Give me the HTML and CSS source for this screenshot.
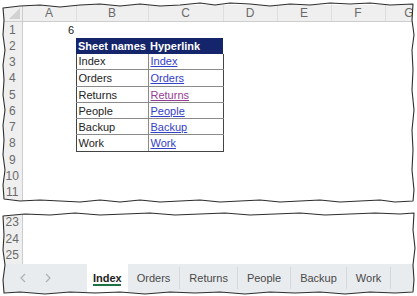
FILE: index.html
```html
<!DOCTYPE html>
<html lang="en">
<head>
    <meta charset="UTF-8">
    <title>Sheet names and hyperlinks</title>
    <link rel="stylesheet" href="styles.css">
</head>
<body>
<div class="page">
    <div class="panel panel-top">
        <table class="sheet">
            <colgroup>
                <col class="c-rh"><col class="c-a"><col class="c-b"><col class="c-c">
                <col class="c-d"><col class="c-e"><col class="c-f"><col class="c-g">
            </colgroup>
            <thead>
                <tr>
                    <th class="corner"><span class="tri"></span></th>
                    <th>A</th><th>B</th><th>C</th><th>D</th><th>E</th><th>F</th><th>G</th>
                </tr>
            </thead>
            <tbody>
                <tr><th>1</th><td class="num">6</td><td></td><td></td><td></td><td></td><td></td><td></td></tr>
                <tr><th>2</th><td></td><td class="hd">Sheet names</td><td class="hd">Hyperlink</td><td></td><td></td><td></td><td></td></tr>
                <tr><th>3</th><td></td><td class="tb">Index</td><td class="tc"><a href="#">Index</a></td><td></td><td></td><td></td><td></td></tr>
                <tr class="tall"><th>4</th><td></td><td class="tb">Orders</td><td class="tc"><a href="#">Orders</a></td><td></td><td></td><td></td><td></td></tr>
                <tr><th>5</th><td></td><td class="tb">Returns</td><td class="tc"><a href="#" class="visited">Returns</a></td><td></td><td></td><td></td><td></td></tr>
                <tr><th>6</th><td></td><td class="tb">People</td><td class="tc"><a href="#">People</a></td><td></td><td></td><td></td><td></td></tr>
                <tr><th>7</th><td></td><td class="tb">Backup</td><td class="tc"><a href="#">Backup</a></td><td></td><td></td><td></td><td></td></tr>
                <tr class="tall"><th>8</th><td></td><td class="tb last">Work</td><td class="tc last"><a href="#">Work</a></td><td></td><td></td><td></td><td></td></tr>
                <tr><th>9</th><td></td><td></td><td></td><td></td><td></td><td></td><td></td></tr>
                <tr><th>10</th><td></td><td></td><td></td><td></td><td></td><td></td><td></td></tr>
                <tr class="tall"><th>11</th><td></td><td></td><td></td><td></td><td></td><td></td><td></td></tr>
            </tbody>
        </table>
    </div>

    <div class="panel panel-bottom">
        <table class="sheet">
            <colgroup>
                <col class="c-rh"><col class="c-a"><col class="c-b"><col class="c-c">
                <col class="c-d"><col class="c-e"><col class="c-f"><col class="c-g">
            </colgroup>
            <tbody>
                <tr class="tall"><th>23</th><td></td><td></td><td></td><td></td><td></td><td></td><td></td></tr>
                <tr><th>24</th><td></td><td></td><td></td><td></td><td></td><td></td><td></td></tr>
                <tr class="tall"><th>25</th><td></td><td></td><td></td><td></td><td></td><td></td><td></td></tr>
            </tbody>
        </table>
        <div class="tabs">
            <div class="nav">
                <svg width="8" height="10" viewBox="0 0 8 10"><path d="M6 1 L2 5 L6 9" fill="none" stroke="#b0b0b0" stroke-width="1.2"/></svg>
                <svg width="8" height="10" viewBox="0 0 8 10"><path d="M2 1 L6 5 L2 9" fill="none" stroke="#b0b0b0" stroke-width="1.2"/></svg>
            </div>
            <div class="tab active">Index</div>
            <div class="tab">Orders</div>
            <div class="tab">Returns</div>
            <div class="tab">People</div>
            <div class="tab">Backup</div>
            <div class="tab">Work</div>
        </div>
    </div>

    <!-- torn paper edges drawn over both panels -->
    <svg class="tear" width="417" height="296" viewBox="0 0 417 296">
        <path fill="#fff" fill-rule="evenodd" d="M0 0 H417 V296 H0 Z
            M3 8 L20 6 L40 5 L60 7 L80 5 L100 4 L120 6 L140 4 L160 6 L180 5 L200 3 L215 5 L230 3 L250 4 L270 6 L290 4 L310 5 L330 3 L350 4 L370 3 L390 5 L413 4
            L412 20 L414 35 L412 50 L413 70 L412 90 L414 110 L412 130 L413 150 L412 170 L414 190 L413 201
            L395 202 L380 200 L360 201 L340 202 L320 200 L300 201 L280 202 L260 200 L240 201 L220 202 L200 200 L180 201 L160 202 L140 200 L120 202 L100 200 L80 202 L60 201 L40 200 L20 201 L4 199
            L3 185 L5 170 L3 155 L4 140 L3 125 L5 110 L3 95 L4 80 L3 65 L5 50 L3 35 L4 20 Z
            M3 216 L25 214 L50 215 L75 213 L100 215 L125 214 L150 213 L175 215 L200 214 L225 213 L250 215 L275 214 L300 213 L325 215 L350 214 L375 213 L400 214 L414 213
            L413 230 L415 248 L413 265 L414 280 L413 292
            L395 293 L370 292 L345 294 L320 292 L295 293 L270 292 L245 294 L220 292 L195 293 L170 292 L145 294 L120 292 L95 293 L70 292 L45 294 L20 292 L4 293
            L3 280 L5 265 L3 250 L4 235 Z"/>
        <path fill="none" stroke="#2e2e2e" stroke-width="1.1" stroke-linejoin="round" d="
            M3 8 L20 6 L40 5 L60 7 L80 5 L100 4 L120 6 L140 4 L160 6 L180 5 L200 3 L215 5 L230 3 L250 4 L270 6 L290 4 L310 5 L330 3 L350 4 L370 3 L390 5 L413 4
            L412 20 L414 35 L412 50 L413 70 L412 90 L414 110 L412 130 L413 150 L412 170 L414 190 L413 201
            L395 202 L380 200 L360 201 L340 202 L320 200 L300 201 L280 202 L260 200 L240 201 L220 202 L200 200 L180 201 L160 202 L140 200 L120 202 L100 200 L80 202 L60 201 L40 200 L20 201 L4 199
            L3 185 L5 170 L3 155 L4 140 L3 125 L5 110 L3 95 L4 80 L3 65 L5 50 L3 35 L4 20 Z
            M3 216 L25 214 L50 215 L75 213 L100 215 L125 214 L150 213 L175 215 L200 214 L225 213 L250 215 L275 214 L300 213 L325 215 L350 214 L375 213 L400 214 L414 213
            L413 230 L415 248 L413 265 L414 280 L413 292
            L395 293 L370 292 L345 294 L320 292 L295 293 L270 292 L245 294 L220 292 L195 293 L170 292 L145 294 L120 292 L95 293 L70 292 L45 294 L20 292 L4 293
            L3 280 L5 265 L3 250 L4 235 Z"/>
    </svg>
</div>
</body>
</html>
```

FILE: styles.css
```css
body {
    margin: 0;
    background: #fff;
    font-family: "Liberation Sans", Arial, sans-serif;
}

.page {
    position: relative;
    width: 417px;
    height: 296px;
    padding: 5px 0 0 3px;
    box-sizing: border-box;
    overflow: hidden;
}

.panel {
    width: 412px;
    overflow: hidden;
}
.panel-bottom {
    margin-top: 13px;
}

.sheet {
    border-collapse: collapse;
    table-layout: fixed;
    width: 430px;
    font-size: 11px;
    color: #222;
}
.c-rh { width: 19px; }
.c-a { width: 54px; }
.c-b { width: 72px; }
.c-c { width: 75px; }
.c-d, .c-e, .c-f { width: 54px; }
.c-g { width: 48px; }

.sheet tr {
    height: 16px;
}
.sheet tr.tall {
    height: 17px;
}

.sheet thead th {
    height: 16px;
    padding: 0;
    background: #efefef;
    color: #6a6a6a;
    font-weight: normal;
    font-size: 12px;
    border-right: 1px solid #dedede;
    border-bottom: 1px solid #cdcdcd;
}
.sheet thead th.corner {
    position: relative;
    border-right: 1px solid #cdcdcd;
}
.tri {
    position: absolute;
    right: 2px;
    bottom: 2px;
    width: 0;
    height: 0;
    border-left: 11px solid transparent;
    border-bottom: 11px solid #d2d2d2;
}

.sheet tbody th {
    padding: 0;
    background: #efefef;
    color: #6a6a6a;
    font-weight: normal;
    font-size: 12px;
    text-align: center;
    border-right: 1px solid #cdcdcd;
}

.sheet td {
    padding: 0 2px;
    white-space: nowrap;
    overflow: hidden;
}
.sheet td.num {
    text-align: right;
}

.sheet td.hd {
    background: #15256b;
    color: #fff;
    font-weight: bold;
}
.sheet td.tb {
    border-left: 1px solid #444;
    border-right: 1px solid #8a8a8a;
    border-bottom: 1px solid #8a8a8a;
}
.sheet td.tc {
    border-right: 1px solid #444;
    border-bottom: 1px solid #8a8a8a;
}
.sheet td.last {
    border-bottom: 1px solid #444;
}
.sheet a {
    color: #3340c8;
    text-decoration: underline;
}
.sheet a.visited {
    color: #963c96;
}

.tabs {
    display: flex;
    height: 32px;
    padding-bottom: 4px;
    box-sizing: border-box;
    background: #e9ecef;
    font-size: 11px;
    color: #484848;
}
.nav {
    width: 84px;
    display: flex;
    align-items: center;
    gap: 17px;
    padding-left: 16px;
    box-sizing: border-box;
}
.tab {
    display: flex;
    align-items: center;
    padding: 0 9px;
    border-right: 1px solid #d6d9dc;
    margin: 3px 0;
}
.tab.active {
    position: relative;
    margin: 0;
    padding: 0 6px;
    background: #fff;
    color: #1e1e1e;
    font-weight: bold;
    border-right: none;
}
.tab.active::after {
    content: "";
    position: absolute;
    left: 6px;
    right: 7px;
    bottom: 6px;
    height: 2px;
    background: #1e7145;
}

.tear {
    position: absolute;
    left: 0;
    top: 0;
    pointer-events: none;
}
```
